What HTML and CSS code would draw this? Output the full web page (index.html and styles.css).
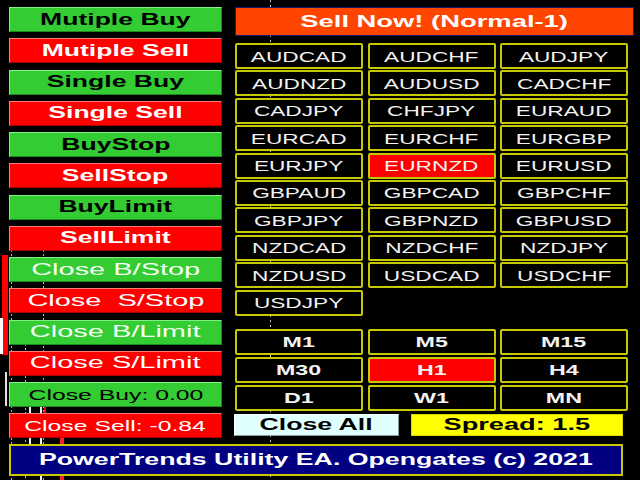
FILE: index.html
```html
<!DOCTYPE html>
<html>
<head>
<meta charset="utf-8">
<title>PowerTrends Utility EA</title>
<link rel="stylesheet" href="styles.css">
</head>
<body>
<div class="screen">
  <div class="chart">
    <div class="deco grid-a"></div>
    <div class="deco grid-b"></div>
    <div class="deco grid-c"></div>
    <div class="deco grid-d"></div>
    <div class="deco red-bar"></div>
    <div class="deco white-bar"></div>
    <div class="deco wick-a"></div>
    <div class="deco wick-b"></div>
    <div class="deco wick-c"></div>
    <div class="deco wick-d"></div>
    <div class="deco wick-e"></div>
  </div>
  <div class="panel">
    <div class="top">
      <div class="left">
        <div class="lbtn green bold"><span class="t">Mutiple Buy</span></div>
        <div class="lbtn red bold"><span class="t">Mutiple Sell</span></div>
        <div class="lbtn green bold"><span class="t">Single Buy</span></div>
        <div class="lbtn red bold"><span class="t">Single Sell</span></div>
        <div class="lbtn green bold"><span class="t">BuyStop</span></div>
        <div class="lbtn red bold"><span class="t">SellStop</span></div>
        <div class="lbtn green bold"><span class="t">BuyLimit</span></div>
        <div class="lbtn red bold"><span class="t">SellLimit</span></div>
        <div class="lbtn green close"><span class="t">Close B/Stop</span></div>
        <div class="lbtn red close"><span class="t">Close&nbsp; S/Stop</span></div>
        <div class="lbtn green close"><span class="t">Close B/Limit</span></div>
        <div class="lbtn red close"><span class="t">Close S/Limit</span></div>
        <div class="lbtn green total"><span class="t">Close Buy: 0.00</span></div>
        <div class="lbtn red total"><span class="t">Close Sell: -0.84</span></div>
      </div>
      <div class="right">
        <div class="sellnow"><span class="t">Sell Now! (Normal-1)</span></div>
        <div class="symbols">
          <div class="cell"><span class="t">AUDCAD</span></div>
          <div class="cell"><span class="t">AUDCHF</span></div>
          <div class="cell"><span class="t">AUDJPY</span></div>
          <div class="cell"><span class="t">AUDNZD</span></div>
          <div class="cell"><span class="t">AUDUSD</span></div>
          <div class="cell"><span class="t">CADCHF</span></div>
          <div class="cell"><span class="t">CADJPY</span></div>
          <div class="cell"><span class="t">CHFJPY</span></div>
          <div class="cell"><span class="t">EURAUD</span></div>
          <div class="cell"><span class="t">EURCAD</span></div>
          <div class="cell"><span class="t">EURCHF</span></div>
          <div class="cell"><span class="t">EURGBP</span></div>
          <div class="cell"><span class="t">EURJPY</span></div>
          <div class="cell active"><span class="t">EURNZD</span></div>
          <div class="cell"><span class="t">EURUSD</span></div>
          <div class="cell"><span class="t">GBPAUD</span></div>
          <div class="cell"><span class="t">GBPCAD</span></div>
          <div class="cell"><span class="t">GBPCHF</span></div>
          <div class="cell"><span class="t">GBPJPY</span></div>
          <div class="cell"><span class="t">GBPNZD</span></div>
          <div class="cell"><span class="t">GBPUSD</span></div>
          <div class="cell"><span class="t">NZDCAD</span></div>
          <div class="cell"><span class="t">NZDCHF</span></div>
          <div class="cell"><span class="t">NZDJPY</span></div>
          <div class="cell"><span class="t">NZDUSD</span></div>
          <div class="cell"><span class="t">USDCAD</span></div>
          <div class="cell"><span class="t">USDCHF</span></div>
          <div class="cell"><span class="t">USDJPY</span></div>
        </div>
        <div class="tf">
          <div class="cell tfc"><span class="t">M1</span></div>
          <div class="cell tfc"><span class="t">M5</span></div>
          <div class="cell tfc"><span class="t">M15</span></div>
          <div class="cell tfc"><span class="t">M30</span></div>
          <div class="cell tfc active"><span class="t">H1</span></div>
          <div class="cell tfc"><span class="t">H4</span></div>
          <div class="cell tfc"><span class="t">D1</span></div>
          <div class="cell tfc"><span class="t">W1</span></div>
          <div class="cell tfc"><span class="t">MN</span></div>
        </div>
        <div class="actions">
          <div class="closeall"><span class="t">Close All</span></div>
          <div class="spread"><span class="t">Spread: 1.5</span></div>
        </div>
      </div>
    </div>
    <div class="footer"><span class="t">PowerTrends Utility EA. Opengates (c) 2021</span></div>
  </div>
</div>
</body>
</html>
```
FILE: styles.css
```css
html, body {
  margin: 0;
  padding: 0;
  background: #000;
}

.screen {
  position: relative;
  width: 640px;
  height: 480px;
  overflow: hidden;
  background: #000;
  font-family: "Liberation Sans", Arial, sans-serif;
}

/* chart background decorations */
.chart {
  position: absolute;
  inset: 0;
  z-index: 0;
}
.deco {
  position: absolute;
}
.grid-a {
  left: 270px;
  top: 0;
  width: 1px;
  height: 480px;
  background: repeating-linear-gradient(to bottom, #c8c8c8 0 2px, transparent 2px 5px);
}
.grid-b {
  left: 11px;
  top: 250px;
  width: 1px;
  height: 230px;
  background: repeating-linear-gradient(to bottom, #b0b0b0 0 2px, transparent 2px 4px);
}
.grid-c {
  left: 43px;
  top: 250px;
  width: 1px;
  height: 230px;
  background: repeating-linear-gradient(to bottom, #b0b0b0 0 2px, transparent 2px 4px);
}
.grid-d {
  left: 25px;
  top: 340px;
  width: 1px;
  height: 140px;
  background: repeating-linear-gradient(to bottom, #b0b0b0 0 2px, transparent 2px 4px);
}
.red-bar {
  left: 2px;
  top: 255px;
  width: 6px;
  height: 100px;
  background: #ff0000;
}
.white-bar {
  left: 0;
  top: 318px;
  width: 3px;
  height: 36px;
  background: #ffffff;
}
.wick-a {
  left: 5px;
  top: 372px;
  width: 2px;
  height: 34px;
  background: #e0e0e0;
}
.wick-b {
  left: 29px;
  top: 404px;
  width: 2px;
  height: 40px;
  background: #f0f0f0;
}
.wick-c {
  left: 40px;
  top: 404px;
  width: 2px;
  height: 76px;
  background: #f0f0f0;
}
.wick-d {
  left: 44px;
  top: 404px;
  width: 2px;
  height: 20px;
  background: #ff0000;
}
.wick-e {
  left: 60px;
  top: 437px;
  width: 4px;
  height: 43px;
  background: #ff2020;
}

/* main panel */
.panel {
  position: relative;
  z-index: 1;
  padding: 7px 0 0 9px;
}

.top {
  display: flex;
  gap: 13px;
}

.t {
  display: inline-block;
  white-space: nowrap;
  transform: scaleX(1.7);
}

.left {
  width: 213px;
  display: flex;
  flex-direction: column;
  gap: 6.25px;
}

.lbtn {
  height: 25px;
  box-sizing: border-box;
  display: flex;
  align-items: center;
  justify-content: center;
  border: 1px solid;
  font-size: 15px;
}
.lbtn.green {
  background: #33cc33;
  border-color: #80ee80 #1d8a1d #1d8a1d #80ee80;
  color: #000;
}
.lbtn.red {
  background: #ff0000;
  border-color: #ff7a7a #a80000 #a80000 #ff7a7a;
  color: #fff;
}
.lbtn.bold {
  font-weight: bold;
  font-size: 16px;
}
.lbtn.bold .t {
  transform: scaleX(1.66);
}
.lbtn.close {
  font-size: 16px;
}
.lbtn.close.green {
  color: #f4fff4;
}
.lbtn.close .t {
  transform: scaleX(1.81);
}
.lbtn.total .t {
  transform: scaleX(1.65);
}

.right {
  width: 399px;
  display: flex;
  flex-direction: column;
}

.sellnow {
  height: 29px;
  box-sizing: border-box;
  background: #ff4500;
  border: 1px solid #1a1a70;
  color: #fff;
  font-weight: bold;
  font-size: 17px;
  display: flex;
  align-items: center;
  justify-content: center;
}
.sellnow .t {
  transform: scaleX(1.61);
}

.symbols {
  margin-top: 7px;
  width: 393px;
  display: grid;
  grid-template-columns: repeat(3, 128px);
  column-gap: 4.5px;
  row-gap: 1.4px;
  grid-auto-rows: 26px;
}

.cell {
  box-sizing: border-box;
  background: #000;
  border: 2px solid #c8c800;
  border-radius: 2px;
  color: #f2f2f2;
  font-size: 15px;
  display: flex;
  align-items: center;
  justify-content: center;
}
.cell .t {
  transform: scaleX(1.51);
}
.cell.active {
  background: #ff0000;
}

.tf {
  margin-top: 13px;
  width: 393px;
  display: grid;
  grid-template-columns: repeat(3, 128px);
  column-gap: 4.5px;
  row-gap: 2px;
  grid-auto-rows: 26px;
}
.tfc {
  font-weight: bold;
  font-size: 14px;
}
.tfc .t {
  transform: scaleX(1.66);
}

.actions {
  margin-top: 3px;
  height: 22px;
  display: flex;
}
.closeall {
  margin-left: -1px;
  width: 165px;
  box-sizing: border-box;
  background: #e0ffff;
  border: 1px solid;
  border-color: #ffffff #8a9a9a #8a9a9a #ffffff;
  color: #000;
  font-weight: bold;
  font-size: 17px;
  display: flex;
  align-items: center;
  justify-content: center;
}
.closeall .t {
  transform: scaleX(1.57);
}
.spread {
  margin-left: 12px;
  width: 212px;
  box-sizing: border-box;
  background: #ffff00;
  border: 1px solid #d8d800;
  color: #000;
  font-weight: bold;
  font-size: 17px;
  display: flex;
  align-items: center;
  justify-content: center;
}
.spread .t {
  transform: scaleX(1.6);
}

.footer {
  margin-top: 6px;
  width: 614px;
  height: 32px;
  box-sizing: border-box;
  background: #000080;
  border: 2px solid #c8c800;
  color: #fff;
  font-weight: bold;
  font-size: 16px;
  display: flex;
  align-items: center;
  justify-content: center;
}
.footer .t {
  transform: scaleX(1.67);
}
```
